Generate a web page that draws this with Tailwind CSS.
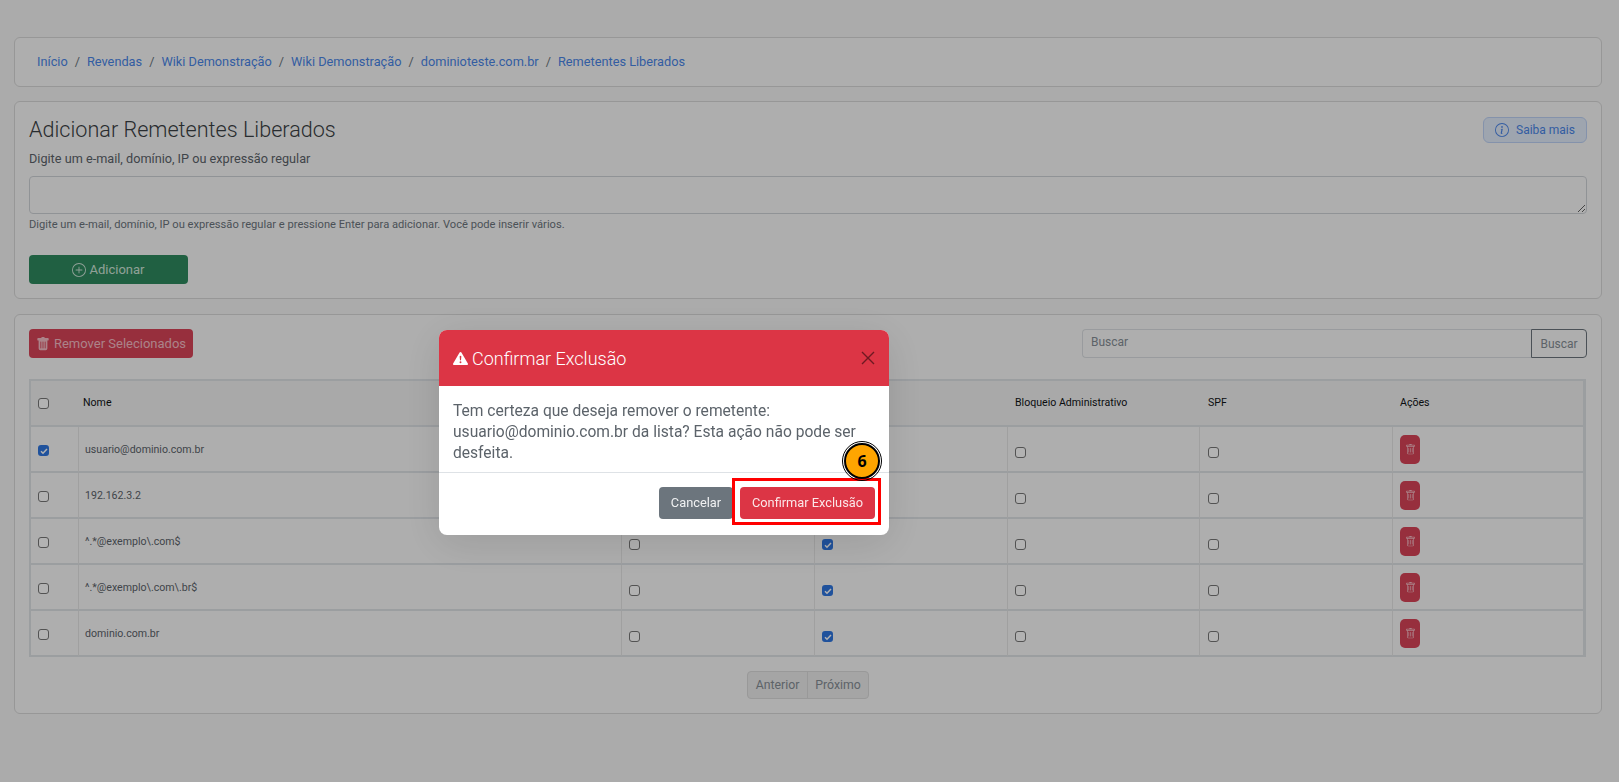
<!DOCTYPE html>
<html lang="en">
<head>
    <meta charset="UTF-8">
    <title>Remetentes Liberados</title>
    <script src="https://cdn.jsdelivr.net/npm/@tailwindcss/browser@4"></script>
</head>
<body class="bg-[#f5f5f5] font-['Roboto',sans-serif] text-[#444b52] h-[782px] overflow-hidden">
    <main class="pt-[37px] pl-[14px] pr-[17px] flex flex-col gap-[15px]">

        <!-- Breadcrumb -->
        <nav class="h-[50px] -mb-[1px] border border-[#d8d8d8] rounded-md bg-[#fafafa] px-[22px] flex items-center gap-[7px] text-[12.75px] text-[#6c757d]">
            <a class="text-[#4a86e8]">Início</a><span>/</span>
            <a class="text-[#4a86e8]">Revendas</a><span>/</span>
            <a class="text-[#4a86e8]">Wiki Demonstração</a><span>/</span>
            <a class="text-[#4a86e8]">Wiki Demonstração</a><span>/</span>
            <a class="text-[#4a86e8]">dominioteste.com.br</a><span>/</span>
            <a class="text-[#4a86e8]">Remetentes Liberados</a>
        </nav>

        <!-- Add form -->
        <section class="h-[198px] border border-[#d8d8d8] rounded-md bg-[#fafafa] px-[14px] pt-[15px]">
            <div class="flex justify-between items-start">
                <h1 class="text-[21.6px] font-light leading-[26px] text-[#3a3f44]">Adicionar Remetentes Liberados</h1>
                <button class="w-[104px] h-[26px] rounded-md border border-[#bdd2f5] bg-[#e3ecfb] text-[#4a86e8] text-[12px] flex items-center justify-center gap-[7px]">
                    <svg class="w-[14px] h-[14px]" viewBox="0 0 16 16" fill="currentColor"><path d="M8 15A7 7 0 1 1 8 1a7 7 0 0 1 0 14m0 1A8 8 0 1 0 8 0a8 8 0 0 0 0 16"/><path d="m8.93 6.588-2.29.287-.082.38.45.083c.294.07.352.176.288.469l-.738 3.468c-.194.897.105 1.319.808 1.319.545 0 1.178-.252 1.465-.598l.088-.416c-.2.176-.492.246-.686.246-.275 0-.375-.193-.304-.533zM9 4.5a1 1 0 1 1-2 0 1 1 0 0 1 2 0"/></svg>
                    Saiba mais
                </button>
            </div>
            <label class="block mt-[7px] text-[12.7px] leading-[18px] text-[#5c636a]">Digite um e-mail, domínio, IP ou expressão regular</label>
            <textarea class="block mt-[8px] w-full h-[38px] border border-[#cfd3d7] rounded bg-[#fafafa]"></textarea>
            <p class="mt-[3px] text-[11.15px] leading-[15px] text-[#6c757d]">Digite um e-mail, domínio, IP ou expressão regular e pressione Enter para adicionar. Você pode inserir vários.</p>
            <button class="mt-[23px] w-[159px] h-[29px] rounded bg-[#2f8a5f] text-[#cfe6da] text-[13px] flex items-center justify-center gap-[3px]">
                <svg class="w-[14px] h-[14px]" viewBox="0 0 16 16" fill="currentColor"><path d="M8 15A7 7 0 1 1 8 1a7 7 0 0 1 0 14m0 1A8 8 0 1 0 8 0a8 8 0 0 0 0 16"/><path d="M8 4a.5.5 0 0 1 .5.5v3h3a.5.5 0 0 1 0 1h-3v3a.5.5 0 0 1-1 0v-3h-3a.5.5 0 0 1 0-1h3v-3A.5.5 0 0 1 8 4"/></svg>
                Adicionar
            </button>
        </section>

        <!-- List -->
        <section class="h-[400px] border border-[#d8d8d8] rounded-md bg-[#fafafa] px-[14px] pt-[14px]">
            <div class="flex justify-between items-start">
                <button class="w-[164px] h-[29px] rounded bg-[#d84458] text-[#f5bcc4] text-[13px] flex items-center justify-center gap-[4px]">
                    <svg class="w-[14px] h-[14px]" viewBox="0 0 16 16" fill="currentColor"><path d="M2.5 1a1 1 0 0 0-1 1v1a1 1 0 0 0 1 1H3v9a2 2 0 0 0 2 2h6a2 2 0 0 0 2-2V4h.5a1 1 0 0 0 1-1V2a1 1 0 0 0-1-1H10a1 1 0 0 0-1-1H7a1 1 0 0 0-1 1zm3 4a.5.5 0 0 1 .5.5v7a.5.5 0 0 1-1 0v-7a.5.5 0 0 1 .5-.5M8 5a.5.5 0 0 1 .5.5v7a.5.5 0 0 1-1 0v-7A.5.5 0 0 1 8 5m3 .5v7a.5.5 0 0 1-1 0v-7a.5.5 0 0 1 1 0"/></svg>
                    Remover Selecionados
                </button>
                <div class="flex w-[505px] h-[29px] text-[12px]">
                    <input class="flex-1 min-w-0 px-2 pb-[3px] border border-[#dcdfe2] border-r-0 rounded-l bg-[#fafafa] placeholder:text-[#868e96]" placeholder="Buscar">
                    <button class="w-[56px] border border-[#6c757d] rounded-r text-[#868e96]">Buscar</button>
                </div>
            </div>

            <table class="mt-[21px] w-[1557px] table-fixed border-separate border-spacing-0 border-2 border-b-0 border-r-[3px] border-[#dee2e6] text-[10.6px]">
                <colgroup>
                    <col class="w-[48px]"><col class="w-[543px]"><col class="w-[193px]"><col class="w-[193px]"><col class="w-[192px]"><col class="w-[193px]"><col>
                </colgroup>
                <thead class="bg-[#f2f2f2] text-left text-[#101316]">
                    <tr class="h-[46px]">
                        <th class="px-[7px] border-b-2 border-[#dee2e6] font-normal"><input type="checkbox" class="block appearance-none w-[11px] h-[11px] border border-[#777] rounded-[3px] bg-white"></th>
                        <th class="px-[4px] border-b-2 border-[#dee2e6] font-normal">Nome</th>
                        <th class="px-[8px] border-b-2 border-[#dee2e6] font-normal"></th>
                        <th class="px-[7px] border-b-2 border-[#dee2e6] font-normal"></th>
                        <th class="px-[7px] border-b-2 border-[#dee2e6] font-normal">Bloqueio Administrativo</th>
                        <th class="px-[8px] border-b-2 border-[#dee2e6] font-normal">SPF</th>
                        <th class="px-[7px] border-b-2 border-[#dee2e6] font-normal">Ações</th>
                    </tr>
                </thead>
                <tbody id="rows"></tbody>
            </table>

            <div class="mt-[14px] flex justify-center">
                <div class="flex h-[28px] w-[122px] rounded border border-[#dcdcdc] bg-[#ececec] text-[12.3px] text-[#868e96]">
                    <span class="w-[60px] flex items-center justify-center border-r border-[#dcdcdc]">Anterior</span>
                    <span class="flex-1 flex items-center justify-center">Próximo</span>
                </div>
            </div>
        </section>
    </main>

    <!-- Backdrop and modal -->
    <div class="fixed inset-0 bg-black/30">
        <div class="relative mt-[330px] ml-[439px] w-[450px] h-[205px] rounded-lg bg-white flex flex-col shadow-[0_8px_40px_rgba(0,0,0,0.12)]">
            <header class="h-[56px] rounded-t-lg bg-[#dc3545] px-[14px] flex items-center text-white">
                <svg class="w-[15px] h-[15px]" viewBox="0 0 16 16" fill="currentColor"><path d="M8.982 1.566a1.13 1.13 0 0 0-1.96 0L.165 13.233c-.457.778.091 1.767.98 1.767h13.713c.889 0 1.438-.99.98-1.767zM8 5c.535 0 .954.462.9.995l-.35 3.507a.552.552 0 0 1-1.1 0L7.1 5.995A.905.905 0 0 1 8 5m.002 6a1 1 0 1 1 0 2 1 1 0 0 1 0-2"/></svg>
                <h2 class="ml-[4px] text-[18px] font-light">Confirmar Exclusão</h2>
                <svg class="ml-auto w-[14px] h-[14px] text-[#6e1a22]" viewBox="0 0 14 14" fill="none" stroke="currentColor" stroke-width="1.4"><path d="M1 1l12 12M13 1L1 13"/></svg>
            </header>
            <div class="h-[87px] px-[14px] pt-[15px] border-b border-[#dee2e6] text-[15.6px] leading-[21px] text-[#5c636a]">
                Tem certeza que deseja remover o remetente: usuario@dominio.com.br da lista? Esta ação não pode ser desfeita.
            </div>
            <footer class="flex-1 flex justify-end items-start pt-[14px] pr-[14px] gap-[7px] text-[12.8px]">
                <button class="w-[74px] h-[32px] rounded bg-[#6c757d] text-[#f0f1f2]">Cancelar</button>
                <button class="w-[135px] h-[32px] rounded bg-[#dc3545] text-[#fbe6e8]">Confirmar Exclusão</button>
            </footer>
            <!-- Tutorial annotation -->
            <div class="absolute left-[293px] top-[148px] w-[149px] h-[47px] border-[3px] border-[#ff0000]"></div>
            <div class="absolute left-[405px] top-[113px] w-[36px] h-[36px] rounded-full bg-[#ffa500] border-2 border-black outline-1 outline-offset-1 outline-black flex items-center justify-center text-[16px] font-bold text-black font-['Open_Sans',sans-serif]">6</div>
        </div>
    </div>

    <script>
    // Rows of the list; checkbox states per column
    const rows = [
        { name: 'usuario@dominio.com.br', first: true },
        { name: '192.162.3.2', first: false },
        { name: '^.*@exemplo\\.com$', first: false },
        { name: '^.*@exemplo\\.com\\.br$', first: false },
        { name: 'dominio.com.br', first: false },
    ];
    const box = '<input type="checkbox" class="block appearance-none w-[11px] h-[11px] border border-[#777] rounded-[3px] bg-white">';
    const checked = '<span class="w-[11px] h-[11px] rounded-[3px] bg-[#2f76e0] flex items-center justify-center"><svg class="w-[8px] h-[8px]" viewBox="0 0 8 8" fill="none" stroke="white" stroke-width="1.5"><path d="M1 4.2l2 2L7 2"/></svg></span>';
    const trash = '<button class="w-[20px] h-[29px] rounded-[5px] bg-[#d84458] text-[#f5bcc4] flex items-center justify-center"><svg class="w-[11px] h-[11px]" viewBox="0 0 16 16" fill="currentColor"><path d="M5.5 5.5A.5.5 0 0 1 6 6v6a.5.5 0 0 1-1 0V6a.5.5 0 0 1 .5-.5m2.5 0a.5.5 0 0 1 .5.5v6a.5.5 0 0 1-1 0V6a.5.5 0 0 1 .5-.5m3 .5a.5.5 0 0 0-1 0v6a.5.5 0 0 0 1 0z"/><path d="M14.5 3a1 1 0 0 1-1 1H13v9a2 2 0 0 1-2 2H5a2 2 0 0 1-2-2V4h-.5a1 1 0 0 1-1-1V2a1 1 0 0 1 1-1H6a1 1 0 0 1 1-1h2a1 1 0 0 1 1 1h3.5a1 1 0 0 1 1 1zM4.118 4 4 4.059V13a1 1 0 0 0 1 1h6a1 1 0 0 0 1-1V4.059L11.882 4zM2.5 3h11V2h-11z"/></svg></button>';
    document.getElementById('rows').innerHTML = rows.map(r => `
        <tr class="h-[46px] bg-[#fafafa]">
            <td class="px-[7px] pt-[3px] border-b-2 border-r border-b-[#dee2e6] border-r-[#e6e6e6]">${r.first ? checked : box}</td>
            <td class="px-[6px] pt-[2px] border-b-2 border-r border-b-[#dee2e6] border-r-[#e6e6e6] text-[#5c636a]">${r.name}</td>
            <td class="px-[7px] pt-[7px] border-b-2 border-r border-b-[#dee2e6] border-r-[#e6e6e6]">${box}</td>
            <td class="px-[7px] pt-[7px] border-b-2 border-r border-b-[#dee2e6] border-r-[#e6e6e6]">${checked}</td>
            <td class="px-[7px] pt-[7px] border-b-2 border-r border-b-[#dee2e6] border-r-[#e6e6e6]">${box}</td>
            <td class="px-[8px] pt-[7px] border-b-2 border-r border-b-[#dee2e6] border-r-[#e6e6e6]">${box}</td>
            <td class="px-[7px] border-b-2 border-b-[#dee2e6]">${trash}</td>
        </tr>`).join('');
    </script>
</body>
</html>
